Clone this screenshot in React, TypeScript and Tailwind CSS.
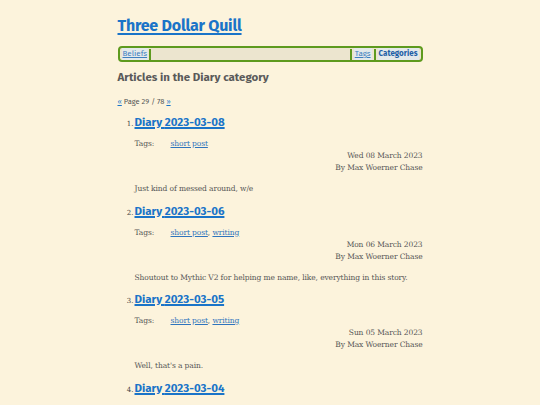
const posts = [
  { n: 1, date: "2023-03-08", tags: ["short post"], long: "Wed 08 March 2023", body: "Just kind of messed around, w/e" },
  { n: 2, date: "2023-03-06", tags: ["short post", "writing"], long: "Mon 06 March 2023", body: "Shoutout to Mythic V2 for helping me name, like, everything in this story." },
  { n: 3, date: "2023-03-05", tags: ["short post", "writing"], long: "Sun 05 March 2023", body: "Well, that's a pain." },
  { n: 4, date: "2023-03-04", tags: ["short post"], long: "Sat 04 March 2023", body: "" },
];

const sans = "font-['Fira_Sans','Lato','Open_Sans',sans-serif]";
const serif = "font-['Roboto_Slab','DejaVu_Serif',serif]";

export default function App() {
  return (
    <div className="min-h-[405px] bg-[#fcf3dc]">
      <div className="mx-auto w-[305px] pt-[14px]">
        {/* Header */}
        <h1 className={`${sans} text-[16px] font-bold leading-[24px] tracking-[-0.2px] text-[#1a74c8]`}>
          <a href="#" className="underline decoration-[1.5px] underline-offset-2">Three Dollar Quill</a>
        </h1>

        {/* Nav */}
        <nav className={`${sans} mt-[8px] flex h-[16px] items-center rounded-[4px] border-2 border-[#5e9a1e] bg-[#ece5cf] px-[2px] text-[8px]`}>
          <a href="#" className="bg-[#e4e9ea] px-[1px] text-[#3f7fc0] underline">Beliefs</a>
          <span className="ml-[1px] h-[11px] w-[2px] bg-[#5e9a1e]" />
          <span className="flex-1" />
          <span className="h-[11px] w-[2px] bg-[#5e9a1e]" />
          <a href="#" className="ml-[2px] bg-[#e4e9ea] px-[1px] text-[#3f7fc0] underline">Tags</a>
          <span className="ml-[2px] h-[11px] w-[2px] bg-[#5e9a1e]" />
          <a href="#" className="ml-[2px] bg-[#e4e9ea] px-[1px] font-bold text-[#1f5fa6]">Categories</a>
        </nav>

        <h2 className={`${sans} mt-[6px] text-[11.5px] font-bold leading-[18px] text-[#5a5a5a]`}>
          Articles in the Diary category
        </h2>

        <p className={`${sans} mt-[10px] text-[7.5px] leading-[11px] text-[#555]`}>
          <a href="#" className="text-[#1a74c8] underline">«</a> Page 29 / 78{" "}
          <a href="#" className="text-[#1a74c8] underline">»</a>
        </p>

        <ol className="mt-[6px] pl-[17px]">
          {posts.map((p) => (
            <li key={p.n} className="pb-[6.5px]">
              <div className="flex h-[18px] items-baseline">
                <span className={`${serif} w-[8px] -ml-[9px] mr-[1px] text-right text-[7px] text-[#444]`}>{p.n}.</span>
                <a href="#" className={`${sans} text-[11.5px] font-bold leading-[18px] text-[#1a74c8] underline decoration-[1.5px]`}>
                  Diary {p.date}
                </a>
              </div>
              <div className={`${serif} text-[7.5px] leading-[12px] tracking-[-0.1px] text-[#555]`}>
                <div className="mt-[7px] flex">
                  <span className="w-[36px]">Tags:</span>
                  <span>
                    {p.tags.map((t, i) => (
                      <span key={t}>
                        <a href="#" className="text-[#2f74bd] underline">{t}</a>
                        {i < p.tags.length - 1 ? ", " : ""}
                      </span>
                    ))}
                  </span>
                </div>
                <div className="text-right">{p.long}</div>
                <div className="text-right">By Max Woerner Chase</div>
                {p.body && <p className="mt-[9px]">{p.body}</p>}
              </div>
            </li>
          ))}
        </ol>
      </div>
    </div>
  );
}
